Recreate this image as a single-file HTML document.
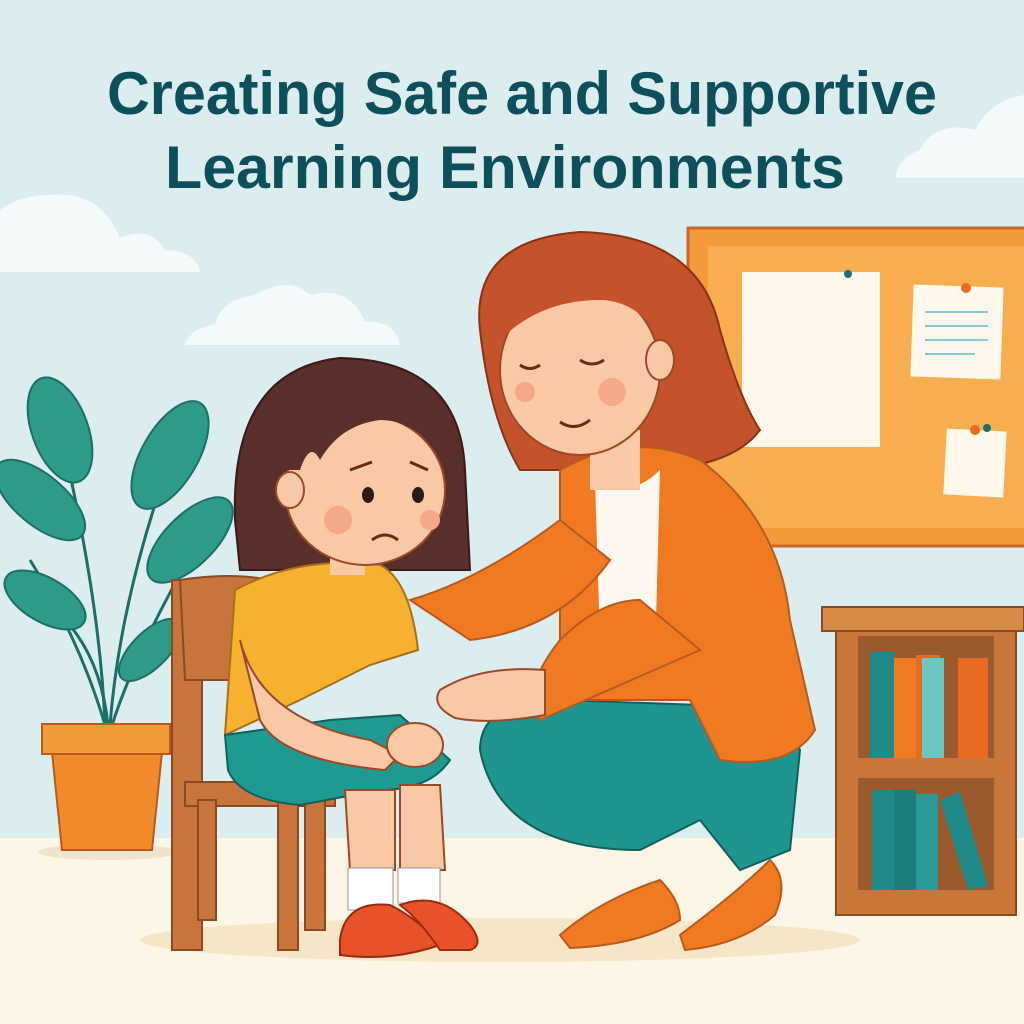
<!DOCTYPE html>
<html><head><meta charset="utf-8"><style>
html,body{margin:0;padding:0;width:1024px;height:1024px;overflow:hidden;background:#dcedf0}
svg{display:block}
</style></head><body>
<svg width="1024" height="1024" viewBox="0 0 1024 1024" xmlns="http://www.w3.org/2000/svg">
<rect width="1024" height="1024" fill="#dcedf0"/>
<rect y="838" width="1024" height="186" fill="#fdf5e6"/>
<g fill="#f4f9fa">
<path d="M0 272 L200 272 Q195 250 165 250 Q150 225 120 238 Q100 190 50 195 Q20 195 0 210Z"/>
<path d="M185 345 L400 345 Q395 320 365 322 Q350 285 310 295 Q290 275 255 295 Q220 300 215 325 Q190 328 185 345Z"/>
<path d="M895 178 L1024 178 L1024 95 Q990 100 975 130 Q935 120 920 150 Q898 158 895 178Z"/>
</g>
<g font-family="Liberation Sans, sans-serif" font-weight="bold" fill="#0d4f5a" text-anchor="middle" font-size="60">
<text x="522" y="114" textLength="830" lengthAdjust="spacingAndGlyphs">Creating Safe and Supportive</text>
<text x="505" y="188" textLength="680" lengthAdjust="spacingAndGlyphs">Learning Environments</text>
</g>
<rect x="688" y="228" width="340" height="318" fill="#f39a3a" stroke="#c8692a" stroke-width="3"/>
<rect x="708" y="246" width="320" height="282" fill="#f7ae50"/>
<rect x="742" y="272" width="138" height="175" fill="#fdf7ec"/>
<circle cx="848" cy="274" r="4" fill="#1d6e6e"/>
<rect x="912" y="286" width="90" height="92" fill="#fdf7ec" transform="rotate(2 957 332)"/>
<g stroke="#8cc6d0" stroke-width="2"><line x1="925" y1="312" x2="988" y2="312"/><line x1="925" y1="326" x2="988" y2="326"/><line x1="925" y1="340" x2="988" y2="340"/><line x1="925" y1="354" x2="975" y2="354"/></g>
<circle cx="966" cy="288" r="5" fill="#e86a20"/>
<rect x="945" y="430" width="60" height="66" fill="#fdf7ec" transform="rotate(3 975 463)"/>
<circle cx="975" cy="430" r="5" fill="#e86a20"/><circle cx="987" cy="428" r="4" fill="#1d6e6e"/>
<g stroke="#1d6e66" stroke-width="3" fill="none"><path d="M105 725 Q100 600 60 430"/><path d="M110 725 Q120 600 170 460"/><path d="M105 725 Q80 640 30 560"/><path d="M112 725 Q140 640 200 540"/><path d="M108 725 Q100 650 55 610"/></g>
<g fill="#2e9a88" stroke="#1d6e66" stroke-width="2">
<ellipse cx="60" cy="430" rx="28" ry="55" transform="rotate(-20 60 430)"/>
<ellipse cx="170" cy="455" rx="28" ry="60" transform="rotate(30 170 455)"/>
<ellipse cx="40" cy="500" rx="25" ry="55" transform="rotate(-50 40 500)"/>
<ellipse cx="190" cy="540" rx="25" ry="55" transform="rotate(45 190 540)"/>
<ellipse cx="45" cy="600" rx="22" ry="45" transform="rotate(-60 45 600)"/>
<ellipse cx="150" cy="650" rx="18" ry="40" transform="rotate(45 150 650)"/>
</g>
<ellipse cx="108" cy="852" rx="70" ry="8" fill="#efe3cc"/>
<path d="M52 752 L162 752 L152 850 L62 850Z" fill="#f08a2a" stroke="#b85a1e" stroke-width="2"/>
<rect x="42" y="724" width="128" height="30" fill="#f39a3a" stroke="#b85a1e" stroke-width="2"/>
<rect x="836" y="625" width="180" height="290" fill="#c8763a" stroke="#8a4a22" stroke-width="2"/>
<rect x="822" y="607" width="202" height="24" fill="#d68a48" stroke="#8a4a22" stroke-width="2"/>
<rect x="858" y="636" width="136" height="122" fill="#9a5a2e"/>
<rect x="858" y="778" width="136" height="112" fill="#9a5a2e"/>
<rect x="870" y="652" width="24" height="106" fill="#1f8a88"/><rect x="894" y="658" width="22" height="100" fill="#f07a22"/><rect x="916" y="655" width="24" height="103" fill="#e86a20"/><rect x="922" y="658" width="22" height="100" fill="#6cc6c6"/><rect x="958" y="658" width="30" height="100" fill="#e86a20"/>
<rect x="872" y="790" width="22" height="100" fill="#1f8a88"/><rect x="894" y="790" width="22" height="100" fill="#1e7e7c"/><rect x="916" y="794" width="22" height="96" fill="#2a9a96"/><path d="M940 800 L960 792 L988 886 L968 890Z" fill="#1f8a88"/>
<ellipse cx="500" cy="940" rx="360" ry="22" fill="#f6e6c8"/>
<g fill="#c9743c" stroke="#8a4a22" stroke-width="2">
<rect x="172" y="580" width="30" height="370"/>
<path d="M180 580 Q230 572 270 580 L265 680 L185 680Z"/>
<rect x="185" y="782" width="150" height="24"/>
<rect x="278" y="800" width="20" height="150"/>
<rect x="305" y="800" width="20" height="130"/>
<rect x="198" y="800" width="18" height="120"/>
</g>
<path d="M480 330 Q470 240 580 232 Q700 235 720 330 Q740 400 760 430 Q730 470 640 470 L520 470 Q490 420 480 330Z" fill="#c4522a" stroke="#8a3318" stroke-width="2"/>
<path d="M480 750 Q480 700 560 700 L700 705 Q780 700 800 750 L790 850 L740 870 L700 820 L640 850 Q500 850 480 750Z" fill="#1e958f" stroke="#12605c" stroke-width="2"/>
<path d="M560 935 Q600 900 660 880 Q680 900 680 920 Q640 945 570 948Z" fill="#f07a22" stroke="#b85a1e" stroke-width="2"/>
<path d="M680 935 Q740 890 770 860 Q790 880 775 915 Q740 945 685 950Z" fill="#f07a22" stroke="#b85a1e" stroke-width="2"/>
<path d="M560 470 Q630 430 700 460 Q780 520 790 620 L815 730 Q790 770 720 760 L690 700 L560 700 Z" fill="#f07a22" stroke="#b85a1e" stroke-width="2"/>
<path d="M595 480 Q630 500 660 470 L655 660 L600 640Z" fill="#fdf7ef"/>
<path d="M410 600 Q480 580 560 520 L610 560 Q560 630 470 640 Z" fill="#f07a22" stroke="#b85a1e" stroke-width="2"/>
<path d="M560 640 Q600 600 640 600 L700 650 L540 720 Q520 690 560 640Z" fill="#f07a22" stroke="#b85a1e" stroke-width="2"/>
<path d="M440 690 Q480 665 545 670 L545 715 Q490 725 455 718 Q430 705 440 690Z" fill="#f9c8a4" stroke="#9a4a2a" stroke-width="2"/>
<rect x="590" y="430" width="50" height="60" fill="#f9c8a4"/>
<ellipse cx="580" cy="370" rx="80" ry="85" fill="#f9c8a4" stroke="#9a4a2a" stroke-width="2"/>
<path d="M500 340 Q520 260 600 270 Q660 280 670 350 Q640 300 600 300 Q540 300 500 340Z" fill="#c4522a"/>
<ellipse cx="660" cy="360" rx="14" ry="20" fill="#f9c8a4" stroke="#9a4a2a" stroke-width="2"/>
<circle cx="612" cy="392" r="14" fill="#f6a88a"/><circle cx="525" cy="392" r="10" fill="#f6a88a"/>
<path d="M520 365 Q530 372 540 365 M580 360 Q592 368 604 360 M560 422 Q575 432 590 420" stroke="#6a2a18" stroke-width="3" fill="none"/>
<path d="M235 520 Q230 370 340 358 Q460 360 465 470 L470 570 L240 570Z" fill="#5a2e2a" stroke="#3a1a18" stroke-width="2"/>
<path d="M235 590 Q300 555 380 565 Q410 580 418 650 L370 665 L300 700 L225 735 Z" fill="#f5b12f" stroke="#a87018" stroke-width="2"/>
<path d="M225 735 L330 720 L400 715 L450 760 Q430 790 380 790 L300 805 Q240 800 228 770Z" fill="#1f9a90" stroke="#12605c" stroke-width="2"/>
<path d="M400 785 L440 785 L445 870 L400 870Z M345 790 L395 790 L395 870 L350 870Z" fill="#f9c8a4" stroke="#9a4a2a" stroke-width="2"/>
<rect x="348" y="868" width="45" height="42" fill="#fff" stroke="#999" stroke-width="1"/>
<rect x="398" y="868" width="42" height="35" fill="#fff" stroke="#999" stroke-width="1"/>
<path d="M340 940 Q345 900 390 905 Q420 920 440 945 Q390 962 340 955Z" fill="#e8522a" stroke="#9a2a10" stroke-width="2"/>
<path d="M400 905 Q440 890 470 925 Q485 945 470 950 L440 950 Q420 920 400 905Z" fill="#e8522a" stroke="#9a2a10" stroke-width="2"/>
<path d="M240 640 Q260 720 370 740 L400 755 L385 770 Q280 760 260 720Z" fill="#f9c8a4" stroke="#9a4a2a" stroke-width="2"/>
<ellipse cx="415" cy="745" rx="28" ry="22" fill="#f9c8a4" stroke="#9a4a2a" stroke-width="2"/>
<rect x="330" y="540" width="35" height="35" fill="#f9c8a4"/>
<ellipse cx="365" cy="490" rx="80" ry="75" fill="#f9c8a4" stroke="#9a4a2a" stroke-width="2"/>
<ellipse cx="290" cy="490" rx="14" ry="18" fill="#f9c8a4" stroke="#9a4a2a" stroke-width="2"/>
<path d="M280 470 Q285 370 360 372 Q455 378 450 470 Q420 420 380 420 Q340 425 320 460 Q310 440 300 470Z" fill="#5a2e2a"/>
<circle cx="338" cy="520" r="14" fill="#f6a88a"/><circle cx="430" cy="520" r="10" fill="#f6a88a"/>
<ellipse cx="368" cy="495" rx="6" ry="8" fill="#2a1a18"/><ellipse cx="418" cy="495" rx="6" ry="8" fill="#2a1a18"/>
<path d="M350 470 L372 462 M410 462 L428 470 M372 540 Q385 530 398 540" stroke="#6a2a18" stroke-width="3" fill="none"/>
</svg>
</body></html>
